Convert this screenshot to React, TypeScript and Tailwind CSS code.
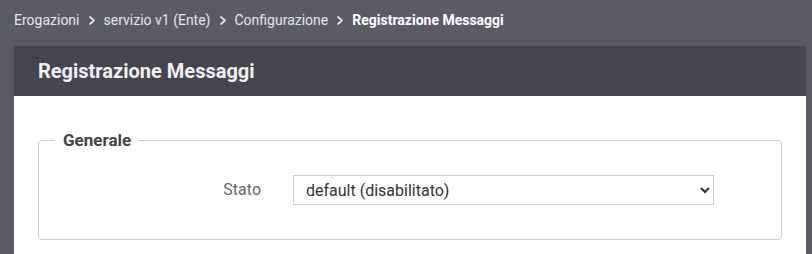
const crumbs = ["Erogazioni", "servizio v1 (Ente)", "Configurazione"];

const Chevron = () => (
  <svg className="mx-[9px] h-[9px] w-[6px]" viewBox="0 0 6 9" fill="none">
    <polyline points="1,1 5,4.5 1,8" stroke="#e6e6e9" strokeWidth="1.7" strokeLinecap="round" strokeLinejoin="round" />
  </svg>
);

const App = () => {
  return (
    <div className="min-h-[254px] bg-[#5b5b64] pl-[14px] pr-[6px] font-['Roboto',sans-serif]">
      <nav className="flex h-[46px] items-center text-sm text-[#e6e6e9] pb-[6px]">
        {crumbs.map((crumb) => (
          <span key={crumb} className="flex items-center">
            <span>{crumb}</span>
            <Chevron />
          </span>
        ))}
        <span className="font-bold text-white">Registrazione Messaggi</span>
      </nav>

      <div className="bg-white">
        <div className="flex h-[50px] items-center bg-[#45454e] px-6">
          <h1 className="text-xl font-bold text-[#f2f2f2]">Registrazione Messaggi</h1>
        </div>

        <div className="px-6 pt-8 pb-[14px]">
          <fieldset className="rounded border border-[#cccccc] pt-[23px] pb-[34px]">
            <legend className="ml-4 px-2 text-[17px] font-bold leading-6 text-[#444]">Generale</legend>
            <div className="flex items-center">
              <label className="w-[222px] text-right text-base text-[#666]">Stato</label>
              <select className="ml-8 h-[30px] w-[421px] border border-[#cccccc] bg-white px-2 text-base text-[#333]">
                <option>default (disabilitato)</option>
                <option>abilitato</option>
              </select>
            </div>
          </fieldset>
        </div>
      </div>
    </div>
  );
};

export default App;
